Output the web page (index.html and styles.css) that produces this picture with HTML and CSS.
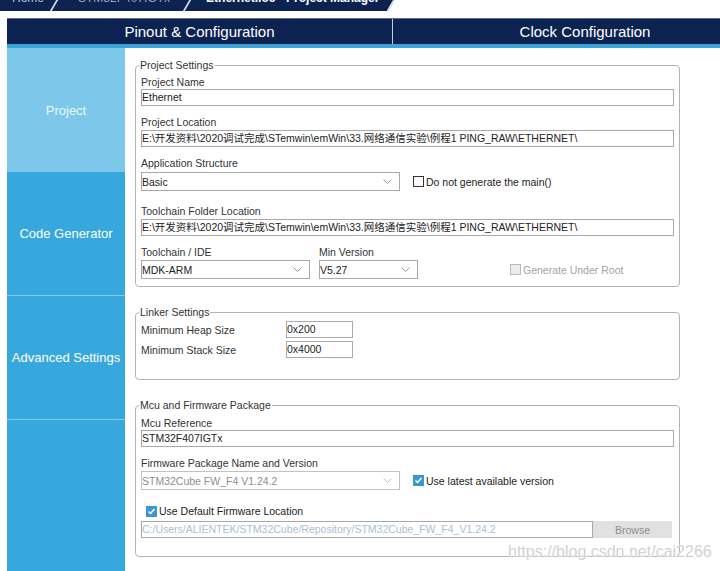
FILE: index.html
```html
<!DOCTYPE html>
<html>
<head>
<meta charset="utf-8">
<title>Project Manager</title>
<link rel="stylesheet" href="styles.css">
</head>
<body>
<div class="crumbs">
  <span class="crumb home">Home</span>
  <span class="sep s1"></span>
  <span class="crumb chip">STM32F407IGTx</span>
  <span class="sep s2"></span>
  <span class="crumb cur">Ethernet.ioc - Project Manager</span>
  <span class="tail"></span>
</div>
<div class="tabs">
  <div class="tab">Pinout &amp; Configuration</div>
  <div class="tab">Clock Configuration</div>
</div>
<div class="strip"></div>
<div class="main">
  <nav class="side">
    <div class="item active">Project</div>
    <div class="item">Code Generator</div>
    <div class="item sepd">Advanced Settings</div>
    <div class="item sepd rest"></div>
  </nav>
  <div class="content">
    <fieldset class="group g1">
      <legend>Project Settings</legend>
      <div class="lbl">Project Name</div>
      <div class="field">Ethernet</div>
      <div class="lbl mt10 mb2">Project Location</div>
      <div class="field">E:\开发资料\2020调试完成\STemwin\emWin\33.网络通信实验\例程1 PING_RAW\ETHERNET\</div>
      <div class="lbl mt10 mb3">Application Structure</div>
      <div class="row">
        <div class="select w259"><span>Basic</span><svg class="chev" width="9" height="5" viewBox="0 0 9 5"><polyline points="0.5,0.5 4.5,4.5 8.5,0.5" fill="none" stroke="#9a9a9a" stroke-width="1"/></svg></div>
        <div class="check ml13"><span class="box"></span><span>Do not generate the main()</span></div>
      </div>
      <div class="lbl mt14 mb2">Toolchain Folder Location</div>
      <div class="field">E:\开发资料\2020调试完成\STemwin\emWin\33.网络通信实验\例程1 PING_RAW\ETHERNET\</div>
      <div class="row tc mt10">
        <div class="col">
          <div class="lbl mb2">Toolchain / IDE</div>
          <div class="select w169"><span>MDK-ARM</span><svg class="chev" width="9" height="5" viewBox="0 0 9 5"><polyline points="0.5,0.5 4.5,4.5 8.5,0.5" fill="none" stroke="#9a9a9a" stroke-width="1"/></svg></div>
        </div>
        <div class="col ml9">
          <div class="lbl mb2">Min Version</div>
          <div class="select w99"><span>V5.27</span><svg class="chev" width="9" height="5" viewBox="0 0 9 5"><polyline points="0.5,0.5 4.5,4.5 8.5,0.5" fill="none" stroke="#9a9a9a" stroke-width="1"/></svg></div>
        </div>
        <div class="check disabled gur"><span class="box"></span><span>Generate Under Root</span></div>
      </div>
    </fieldset>

    <fieldset class="group g2">
      <legend>Linker Settings</legend>
      <div class="lrow"><div class="lbl">Minimum Heap Size</div><div class="field">0x200</div></div>
      <div class="lrow"><div class="lbl">Minimum Stack Size</div><div class="field">0x4000</div></div>
    </fieldset>

    <fieldset class="group g3">
      <legend>Mcu and Firmware Package</legend>
      <div class="lbl">Mcu Reference</div>
      <div class="field">STM32F407IGTx</div>
      <div class="lbl mt10 mb2">Firmware Package Name and Version</div>
      <div class="row">
        <div class="select w259 dis"><span>STM32Cube FW_F4 V1.24.2</span><svg class="chev" width="9" height="5" viewBox="0 0 9 5"><polyline points="0.5,0.5 4.5,4.5 8.5,0.5" fill="none" stroke="#c4c4c4" stroke-width="1"/></svg></div>
        <div class="check ml13"><span class="box on"><svg width="9" height="9" viewBox="0 0 9 9"><polyline points="1.5,4.5 3.5,6.5 7.5,2" fill="none" stroke="#fff" stroke-width="1.5"/></svg></span><span>Use latest available version</span></div>
      </div>
      <div class="check deff"><span class="box on"><svg width="9" height="9" viewBox="0 0 9 9"><polyline points="1.5,4.5 3.5,6.5 7.5,2" fill="none" stroke="#fff" stroke-width="1.5"/></svg></span><span>Use Default Firmware Location</span></div>
      <div class="row path">
        <div class="field dis w452">C:/Users/ALIENTEK/STM32Cube/Repository/STM32Cube_FW_F4_V1.24.2</div>
        <div class="btn">Browse</div>
      </div>
    </fieldset>
  </div>
</div>
<div class="wm">https://blog.csdn.net/cai2266</div>
</body>
</html>
```
FILE: styles.css
```css
* { box-sizing: border-box; }
html, body { margin: 0; padding: 0; }
body {
  width: 720px;
  height: 571px;
  overflow: hidden;
  background: #fff;
  position: relative;
  font-family: "Liberation Sans", Arial, "Noto Sans CJK SC", sans-serif;
  color: #333;
}

/* breadcrumb */
.crumbs {
  display: flex;
  height: 11px;
  overflow: hidden;
  background: #0c2352;
}
.crumb {
  font-size: 12px;
  line-height: 14px;
  margin-top: -9px;
  white-space: nowrap;
  flex: none;
}
.crumb.home { margin-left: 12px; color: #b9c3d3; }
.crumb.chip { color: #9ba7ba; }
.crumb.cur { color: #fff; font-weight: bold; }
.sep {
  flex: none;
  width: 2px;
  height: 11px;
  background: #d6dbe4;
  transform: skewX(-30deg);
}
.sep.s1 { margin: 0 23px 0 9px; }
.sep.s2 { margin: 0 18px 0 16px; }
.tail {
  flex: 1;
  margin-left: 11px;
  margin-right: -20px;
  background: #fff;
  border-left: 2px solid #d6dbe4;
  transform: skewX(-30deg);
}

/* tabs */
.tabs {
  display: flex;
  height: 26px;
  margin: 7px 0 0 7px;
  overflow: hidden;
  background: #0c2352;
  border-top: 1px solid #5d6e8c;
}
.tab {
  flex: 0 0 385px;
  display: flex;
  align-items: center;
  justify-content: center;
  color: #fff;
  font-size: 15px;
}
.tab + .tab { border-left: 1px solid #c5ccd8; }
.strip {
  height: 4px;
  margin-left: 7px;
  background: #3aa3da;
}

/* main */
.main {
  display: flex;
  margin-left: 7px;
  height: 523px;
}
.side {
  width: 118px;
  flex: none;
  display: flex;
  flex-direction: column;
  background: #37a8dd;
}
.item {
  height: 124px;
  flex: none;
  display: flex;
  align-items: center;
  justify-content: center;
  color: #fff;
  font-size: 13px;
}
.item.active { background: #7cc7ea; color: #eef7fc; }
.item + .item:not(.sepd) { height: 123px; }
.item.sepd { border-top: 1px solid #86c9ea; }
.item.rest { flex: 1; }

.content {
  flex: 1;
  padding: 11px 40px 0 10px;
}

/* group boxes */
.group {
  margin: 0;
  border: 1px solid #b3b3b3;
  border-radius: 4px;
  padding: 5px 5px 7px;
  min-width: 0;
}
.group legend {
  font-size: 10.5px;
  line-height: 12px;
  padding: 0 1px;
  margin-left: -2px;
  color: #333;
}
.g2 { margin-top: 19px; padding: 3px 5px 21px; }
.g3 { margin-top: 19px; padding: 6px 5px 18px; }

.lbl {
  font-size: 10.5px;
  line-height: 12px;
  margin-bottom: 1px;
  color: #333;
  white-space: nowrap;
}
.mt10 { margin-top: 10px; }
.mt14 { margin-top: 14px; }
.mb2 { margin-bottom: 2px; }
.mb3 { margin-bottom: 3px; }
.ml9 { margin-left: 9px; }
.ml13 { margin-left: 13px; }

.field {
  height: 17px;
  border: 1px solid #a9a9a9;
  background: #fff;
  font-size: 10.5px;
  line-height: 15px;
  padding: 0;
  color: #222;
  white-space: nowrap;
  overflow: hidden;
}
.field.dis { color: #a9c0d4; }

.row { display: flex; align-items: center; }
.row.tc { align-items: flex-end; }
.col { display: flex; flex-direction: column; }

.select {
  height: 19px;
  display: flex;
  align-items: center;
  justify-content: space-between;
  border: 1px solid #a9a9a9;
  background: #fff;
  padding: 0 7px 0 0;
  font-size: 10.5px;
  color: #222;
}
.select.dis { color: #8e8e8e; border-color: #c2c2c2; }
.chev { display: block; }
.w259 { width: 259px; }
.w169 { width: 169px; }
.w99 { width: 99px; }
.w452 { width: 452px; flex: none; }

.check {
  display: flex;
  align-items: center;
  gap: 2px;
  font-size: 10.5px;
  line-height: 12px;
  color: #222;
  white-space: nowrap;
}
.box {
  width: 11px;
  height: 11px;
  border: 1px solid #333;
  background: #fff;
  display: flex;
  align-items: center;
  justify-content: center;
  flex: none;
}
.box.on { background: #3b97d4; border-color: #3b97d4; }
.check.disabled { color: #a3a3a3; }
.check.disabled .box { border-color: #b9b9b9; background: #ececec; }
.gur { margin-left: 92px; height: 19px; }
.deff { margin: 15px 0 0 5px; }

.path { margin-top: 4px; }
.btn {
  width: 79px;
  height: 17px;
  flex: none;
  background: #e1e1e1;
  color: #8f8f8f;
  font-size: 10.5px;
  display: flex;
  align-items: center;
  justify-content: center;
}

/* linker rows */
.lrow { display: flex; align-items: center; }
.lrow .lbl { width: 145px; margin: 0; }
.lrow .field { width: 67px; }
.lrow + .lrow { margin-top: 3px; }

/* watermark */
.wm {
  position: absolute;
  left: 508px;
  top: 543px;
  font-size: 16px;
  color: #d2d2d2;
  text-shadow: 0 0 1px #fff, 0 0 1px #fff;
  white-space: nowrap;
}
```
